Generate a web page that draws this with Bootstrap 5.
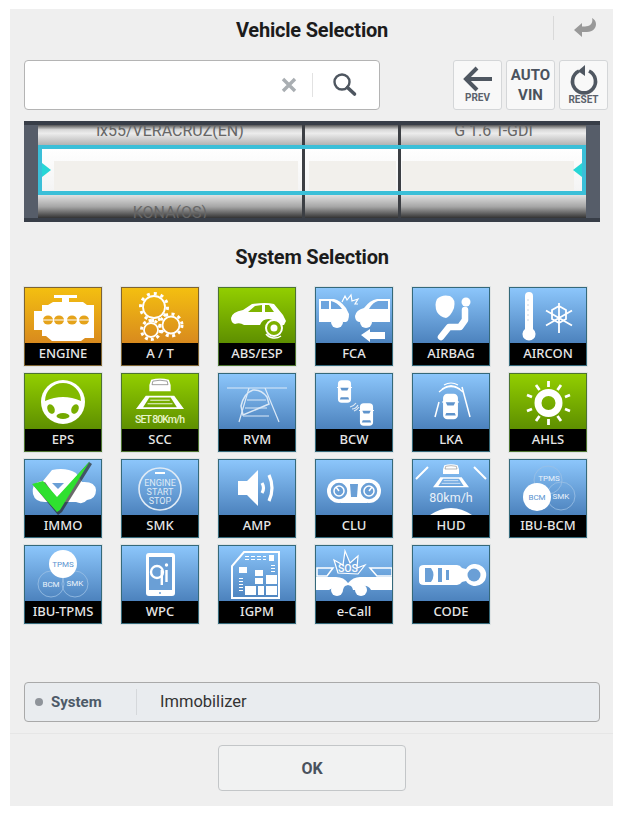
<!DOCTYPE html>
<html lang="en">
<head>
  <meta charset="UTF-8" />
  <meta name="viewport" content="width=device-width, initial-scale=1.0" />
  <title>Vehicle Selection</title>
  <link href="https://cdn.jsdelivr.net/npm/bootstrap@5.3.0/dist/css/bootstrap.min.css" rel="stylesheet" />
  <style>
    body { background: #fff; font-family: Roboto, "Liberation Sans", sans-serif; }
    .panel-main { width: 603px; height: 797px; margin: 9px 0 0 10px; padding: 0 13px 0 14px; background: #efefef; }
    .head-bar { height: 42px; }
    .head-title { font-size: 20px; font-weight: 700; color: #1c1c1c; letter-spacing: -.2px; }
    .head-back { right: -15px; top: 7px; width: 62px; height: 24px; border-left: 1px solid #d9d9d9; }
    .tool-row { height: 50px; margin: 9px -8px 0 0; }
    .search-box { width: 356px; height: 50px; background: #fff; border: 1px solid #b4b4b4; border-radius: 4px; }
    .search-x { margin-right: 15px; }
    .search-sep { width: 1px; height: 24px; background: #e2e2e2; }
    .search-glass { margin: 0 20px 0 18px; }
    .tool-btn { width: 49px; height: 50px; padding: 0; background: #f8f8f8; border: 1px solid #d4d6d8; border-radius: 3px; color: #4a525e; font-weight: 700; line-height: 1; }
    .tool-btn small { font-size: 10px; color: #5a616b; }
    .tool-auto { font-size: 15px; line-height: 20px; }
    .picker { height: 101px; margin-top: 11px; padding: 4px 14px; background: #565d69; box-shadow: inset 0 4px 0 #383e48, inset 0 -4px 0 #383e48; }
    .wheel { background: linear-gradient(#555 0, #d8d8d8 5%, #ececec 9%, #b0b0b0 22%, #fff 24%, #f4f4f4 70%, #e2e2e2 75%, #a5a5a5 88%, #333 100%); color: #666; font-size: 16px; text-align: center; overflow: hidden; }
    .wheel-a { width: 264px; }
    .wheel-b { width: 93px; }
    .wheel-c { width: 185px; }
    .wheel-gap { width: 3px; background: #3c3f44; }
    .wheel-top { height: 21px; line-height: 12px; }
    .wheel-mid { height: 49px; padding: 15px 4px 5px 16px; }
    .wheel-b .wheel-mid { padding: 15px 2px 5px 4px; }
    .wheel-c .wheel-mid { padding: 15px 12px 5px 1px; }
    .wheel-mid div { height: 100%; background: #f2f0ec; }
    .wheel-bot { height: 23px; padding-top: 10px; line-height: 15px; }
    .pick-frame { left: 14px; right: 14px; top: 24px; height: 50px; border: 4px solid #3bbfd8; }
    .pick-arrow { top: 14px; width: 0; height: 0; border-top: 7px solid transparent; border-bottom: 7px solid transparent; }
    .pick-left { left: 0; border-left: 9px solid #27d6d6; }
    .pick-right { right: 0; border-right: 9px solid #27d6d6; }
    .sys-title { height: 30px; margin-top: 20px; font-size: 20px; font-weight: 700; line-height: 30px; color: #1c1c1c; text-align: center; letter-spacing: -.2px; }
    .tile-grid { display: grid; grid-template-columns: repeat(6, 78px); grid-auto-rows: 79px; gap: 7px 19px; margin-top: 15px; height: 338px; }
    .tile { border: 1px solid #35697a; box-shadow: 0 0 0 1px #dfe3e4; }
    .tile svg { display: block; width: 76px; height: 55px; }
    .tile-blue svg { background: linear-gradient(#8cc6fb, #4c82bd); }
    .tile-green { border-color: #4d7430; }
    .tile-green svg { background: linear-gradient(#92ce00, #5e8f00); }
    .tile-orange { border-color: #7f6432; }
    .tile-orange svg { background: linear-gradient(#f4bf10, #d88a1e); }
    .tile-name { height: 22px; background: #000; color: #e6e6e6; font-family: "Noto Sans", sans-serif; font-size: 13px; font-weight: 500; line-height: 21px; text-align: center; white-space: nowrap; }
    .info-bar { height: 40px; margin-top: 57px; background: #e9ecef; border: 1px solid #a9a9a9; border-radius: 4px; }
    .info-dot { width: 8px; height: 8px; margin-left: 10px; background: #8f949a; border-radius: 50%; }
    .info-key { width: 85px; margin-left: 8px; font-size: 15px; font-weight: 700; color: #4d5a68; }
    .info-sep { width: 1px; height: 26px; background: #d5d8db; }
    .info-val { margin-left: 23px; font-size: 16.5px; color: #333; }
    .foot-line { margin: 11px -13px 0 -14px; border-top: 1px solid #e6e6e6; }
    .ok-btn { width: 188px; height: 46px; margin-top: 11px; padding-top: 8px; padding-bottom: 6px; background: #f1f2f2; border: 1px solid #c3c6c8; border-radius: 4px; font-size: 16px; font-weight: 700; color: #4a525e; }
  </style>
</head>
<body>
  <svg width="0" height="0" class="d-block">
    <!-- small car seen from above -->
    <symbol id="car-top" viewBox="0 0 16 26">
      <rect x="1" y="1" width="14" height="24" rx="4" fill="#fff"/>
      <path d="M3.5 9h9l-1.500 3h-6zM4 19h8l1 2.500H3z" fill="#5f94cc"/>
      <path d="M0 9l2-1M16 9l-2-1" stroke="#fff"/>
    </symbol>
    <!-- car seen from behind, on a lane -->
    <symbol id="car-lane" viewBox="0 0 56 36">
      <path d="M18 2q10-3 20 0l2 6v7H16V8z" fill="#fff"/>
      <path d="M20 3.500q8-2 16 0l1 4H19z" fill="none" stroke="#666" stroke-width=".7"/>
      <path d="M12 20h32l11 15H1zM16 22l-7 11h38l-7-11z" fill="#fff" fill-rule="evenodd"/>
      <path d="M17 25h22M14 29h28" stroke="#fff"/>
    </symbol>
  </svg>

  <div class="panel-main">
    <div class="head-bar position-relative d-flex align-items-center justify-content-center">
      <span class="head-title">Vehicle Selection</span>
      <div class="head-back position-absolute d-flex align-items-center justify-content-center">
        <svg width="24" height="20" viewBox="0 0 24 20"><path d="M9 10V5l-8 7 8 7v-5h5c6 0 9-4 9-8 0-3-2-5-4-6 1 3 0 7-4 8-2 .5-4 .5-6 .5z" fill="#999"/></svg>
      </div>
    </div>

    <div class="tool-row d-flex">
      <div class="search-box d-flex align-items-center">
        <div class="flex-grow-1"></div>
        <svg class="search-x" width="16" height="16" viewBox="0 0 16 16"><path d="M2 2l12 12M14 2L2 14" stroke="#a9aeb2" stroke-width="3.400"/></svg>
        <div class="search-sep"></div>
        <svg class="search-glass" width="28" height="26" viewBox="0 0 28 26"><circle cx="11" cy="10" r="7.500" fill="none" stroke="#4e5660" stroke-width="2.400"/><path d="M16.500 15.500l7 6.500" stroke="#4e5660" stroke-width="3.600" stroke-linecap="round"/></svg>
      </div>
      <div class="d-flex ms-auto gap-1 tool-group">
        <button class="btn tool-btn d-flex flex-column align-items-center" type="button">
          <svg class="mt-1" width="32" height="28" viewBox="0 0 32 28"><path d="M30 14H5M15 3L4 14l11 11" fill="none" stroke="#4f5761" stroke-width="4"/></svg>
          <small>PREV</small>
        </button>
        <button class="btn tool-btn tool-auto" type="button">AUTO<br />VIN</button>
        <button class="btn tool-btn d-flex flex-column align-items-center" type="button">
          <svg class="mt-1" width="32" height="30" viewBox="0 0 32 30"><path d="M11 6a11.500 11.500 0 1 0 10 0" fill="none" stroke="#4f5761" stroke-width="3.600"/><path d="M17 0v11l-7-5z" fill="#4f5761"/></svg>
          <small>RESET</small>
        </button>
      </div>
    </div>

    <div class="picker position-relative d-flex">
      <div class="wheel wheel-a">
        <div class="wheel-top">ix55/VERACRUZ(EN)</div>
        <div class="wheel-mid"><div></div></div>
        <div class="wheel-bot">KONA(OS)</div>
      </div>
      <div class="wheel-gap"></div>
      <div class="wheel wheel-b">
        <div class="wheel-top"></div>
        <div class="wheel-mid"><div></div></div>
        <div class="wheel-bot"></div>
      </div>
      <div class="wheel-gap"></div>
      <div class="wheel wheel-c">
        <div class="wheel-top">G 1.6 T-GDI</div>
        <div class="wheel-mid"><div></div></div>
        <div class="wheel-bot"></div>
      </div>
      <div class="pick-frame position-absolute">
        <span class="pick-arrow pick-left position-absolute"></span>
        <span class="pick-arrow pick-right position-absolute"></span>
      </div>
    </div>

    <div class="sys-title">System Selection</div>

    <div class="tile-grid">
      <div class="tile tile-orange">
        <svg viewBox="0 0 76 55"><path d="M29 7h23v3H44v4h14l4 3h7v33H60l-4 3H27l-6-5h-4V42H9V23h8v-6h6l5-3h9v-4h-8z" fill="#fff"/><g fill="#e5a31a"><ellipse cx="23" cy="32" rx="5" ry="4.500"/><ellipse cx="34" cy="32" rx="5" ry="4.500"/><ellipse cx="47" cy="32" rx="5" ry="4.500"/><ellipse cx="59" cy="32" rx="5" ry="4.500"/></g><path d="M16 32h48" stroke="#fff"/></svg>
        <div class="tile-name">ENGINE</div>
      </div>
      <div class="tile tile-orange">
        <svg viewBox="0 0 76 55" fill="none" stroke="#fff"><circle cx="32" cy="19" r="11" stroke-width="1.800"/><circle cx="32" cy="19" r="13.500" stroke-width="3" stroke-dasharray="3 4"/><circle cx="49" cy="37" r="8.500" stroke-width="1.800"/><circle cx="49" cy="37" r="11" stroke-width="3" stroke-dasharray="3 3.500"/><circle cx="29" cy="42" r="7" stroke-width="1.800"/><circle cx="29" cy="42" r="9.500" stroke-width="3" stroke-dasharray="3 3"/></svg>
        <div class="tile-name">A / T</div>
      </div>
      <div class="tile tile-green">
        <svg viewBox="0 0 76 55"><path d="M12 30q1-6 12-8l9-6q14-2 22 0l9 11 3 6-2 4H58a9 9 0 0 0-17 0H25a9 9 0 0 0-9-1q-4-1-4-6z" fill="#fff"/><path d="M36 18l-7 6h14v-7zM46 17v7h9l-5-7z" fill="#7fb400"/><circle cx="55" cy="40" r="8" fill="#7cb000" stroke="#fff" stroke-width="2"/><circle cx="55" cy="40" r="3.500" fill="#fff"/><path d="M47 46a11 11 0 0 0 15 2" fill="none" stroke="#fff" stroke-width="1.500"/></svg>
        <div class="tile-name">ABS/ESP</div>
      </div>
      <div class="tile tile-blue">
        <svg viewBox="0 0 76 55"><path d="M3 11h15q6 1 12 9l3 6q0 7-3 8h-3a7 7 0 0 0-12 0H3z" fill="#fff"/><path d="M5 13v8h8v-8zM15 13v8h11q-5-7-11-8z" fill="#6ea5de"/><circle cx="21" cy="34" r="6" fill="#fff"/><path d="M74 11H61q-7 1-13 9-8 2-9 8 0 5 4 6h1a7 7 0 0 1 12 0h18z" fill="#fff"/><path d="M72 13H62q-5 1-9 8h19z" fill="#6ea5de"/><circle cx="50" cy="34" r="6" fill="#fff"/><path d="M26 14l3-6 2 4 4-5 1 6 6-2-3 5h3" fill="none" stroke="#fff" stroke-width="1.200"/><path d="M45 47l9-6v3h15v7H54v3z" fill="#fff"/></svg>
        <div class="tile-name">FCA</div>
      </div>
      <div class="tile tile-blue">
        <svg viewBox="0 0 76 55"><path d="M24 11q5-5 13-3 6 3 4 12-3 8-8 10-6-1-9-6-3-7 0-13z" fill="#fff"/><circle cx="53" cy="14" r="4.500" fill="#fff"/><path d="M52 22v10l-5 7H36l-8 10" fill="none" stroke="#fff" stroke-width="6.500" stroke-linecap="round" stroke-linejoin="round"/></svg>
        <div class="tile-name">AIRBAG</div>
      </div>
      <div class="tile tile-blue">
        <svg viewBox="0 0 76 55"><path d="M15 8a4 4 0 0 1 8 0v33a6.500 6.500 0 1 1-8 0z" fill="#fff"/><path d="M17 12h2M17 17h2M17 22h2M17 27h2M17 32h2" stroke="#bcd" stroke-width=".8"/><g stroke="#fff" stroke-width="1.800" fill="none"><path d="M42 22l7-4 7 4v9l-7 4-7-4zM49 15v30M36 22.500l26 15M62 22.500l-26 15"/></g></svg>
        <div class="tile-name">AIRCON</div>
      </div>

      <div class="tile tile-green">
        <svg viewBox="0 0 76 55"><circle cx="38" cy="28" r="22" fill="#fff"/><path d="M20 27a18 18 0 0 1 36 0q-18-8-36 0z" fill="#82ba00"/><ellipse cx="26" cy="35" rx="3.500" ry="5" fill="#79ae00" transform="rotate(-25 26 35)"/><ellipse cx="50" cy="35" rx="3.500" ry="5" fill="#79ae00" transform="rotate(25 50 35)"/><ellipse cx="38" cy="42" rx="6.500" ry="3" fill="#74a800"/></svg>
        <div class="tile-name">EPS</div>
      </div>
      <div class="tile tile-green">
        <svg viewBox="0 0 76 55"><use href="#car-lane" x="13" y="4" width="50" height="32"/><text x="38" y="49" text-anchor="middle" fill="#e8f5c8" font-family="Roboto" font-size="10.500" font-weight="500" textLength="50">SET 80Km/h</text></svg>
        <div class="tile-name">SCC</div>
      </div>
      <div class="tile tile-blue">
        <svg viewBox="0 0 76 55" fill="none" stroke="#dbe9f7" stroke-width="1.200"><path d="M8 14h60M20 48l10-34M60 48L46 14M24 42h26M26 34h22M28 26h19"/><path d="M22 32q3-13 12-16 8-1 14 7l2 7-26 11z" stroke-width="1.500"/></svg>
        <div class="tile-name">RVM</div>
      </div>
      <div class="tile tile-blue">
        <svg viewBox="0 0 76 55"><use href="#car-top" x="21" y="5" width="15" height="25"/><use href="#car-top" x="43" y="28" width="15" height="25"/><path d="M36 35q4 0 6-4M34 33q4-1 6-4M38 37q3-1 5-4" fill="none" stroke="#dfeaf5" stroke-width="1.200"/></svg>
        <div class="tile-name">BCW</div>
      </div>
      <div class="tile tile-blue">
        <svg viewBox="0 0 76 55"><use href="#car-top" x="29" y="17" width="17" height="31"/><path d="M26 18q12-11 24 0M29 15q9-7 18 0M31 11q7-4 14 0" fill="none" stroke="#fff" stroke-width="1.200"/><path d="M26 28l-4 15M49 13l8 30" stroke="#fff" stroke-width="1.500"/></svg>
        <div class="tile-name">LKA</div>
      </div>
      <div class="tile tile-green">
        <svg viewBox="0 0 76 55"><circle cx="38.500" cy="29" r="10.500" fill="none" stroke="#fff" stroke-width="7"/><path d="M38.500 7v6M38.500 45v6M26 11l3.500 5M51 11l-3.500 5M26 47l3.500-5M51 47l-3.500-5M17 21l5 2M60 21l-5 2M17 37l5-2M60 37l-5-2" stroke="#fff" stroke-width="2.800"/></svg>
        <div class="tile-name">AHLS</div>
      </div>

      <div class="tile tile-blue">
        <svg viewBox="0 0 76 55"><path d="M8 34q-2-12 10-13l9-11q14-3 24 3l6 9q13-1 14 8 0 9-9 10-4 5-11 2H20q-10 0-12-8z" fill="#fff"/><path d="M27 23h12l-6 6z" fill="#6a9fd6"/><path d="M9 26l11-4 12 17L64 2l3 2-30 48-4 3z" fill="#2b2b2b" opacity=".7"/><path d="M7 24l11-3 14 16L65 1 35 50l-3 2z" fill="#2fe02f"/></svg>
        <div class="tile-name">IMMO</div>
      </div>
      <div class="tile tile-blue">
        <svg viewBox="0 0 76 55"><circle cx="38" cy="29" r="21" fill="none" stroke="#dfeaf5" stroke-width="1.600"/><path d="M33 13h10" stroke="#fff" stroke-width="2"/><g fill="#dfeaf5" font-family="Roboto" font-size="9" text-anchor="middle"><text x="38" y="26">ENGINE</text><text x="38" y="35">START</text><text x="38" y="44">STOP</text></g></svg>
        <div class="tile-name">SMK</div>
      </div>
      <div class="tile tile-blue">
        <svg viewBox="0 0 76 55"><path d="M19 21h9l11-11v36L28 35h-9z" fill="#fff"/><path d="M43 23q3 5 0 10M50 15q6 13 0 26" fill="none" stroke="#fff" stroke-width="3.200"/></svg>
        <div class="tile-name">AMP</div>
      </div>
      <div class="tile tile-blue">
        <svg viewBox="0 0 76 55"><g fill="#fff"><circle cx="23" cy="31" r="12"/><circle cx="53" cy="31" r="12"/><path d="M23 19h30l-2 24H25z"/></g><path d="M34 24h8l-1 13h-6z" fill="#6a9fd6"/><g fill="#6a9fd6" stroke="#fff" stroke-width="1.500"><circle cx="23" cy="31" r="9"/><circle cx="53" cy="31" r="9"/></g><g fill="none" stroke="#fff" stroke-width="1.500"><circle cx="23" cy="31" r="5"/><circle cx="53" cy="31" r="5"/><path d="M23 31l-3-4M53 31l3-4"/></g></svg>
        <div class="tile-name">CLU</div>
      </div>
      <div class="tile tile-blue">
        <svg viewBox="0 0 76 55"><path d="M3 19L15 7M73 19L61 7" stroke="#fff" stroke-width="2"/><use href="#car-lane" x="19" y="4" width="38" height="24"/><text x="38" y="42" text-anchor="middle" fill="#e8f0f8" font-family="Roboto" font-size="12.500">80km/h</text><path d="M17 55q21-14 42 0z" fill="#fff"/></svg>
        <div class="tile-name">HUD</div>
      </div>
      <div class="tile tile-blue">
        <svg viewBox="0 0 76 55"><g fill="none" stroke="#9cc0e4" stroke-width=".8"><circle cx="38" cy="20" r="14"/><circle cx="51" cy="36" r="14"/></g><circle cx="27" cy="37" r="14" fill="#fff"/><g font-family="Roboto" font-size="8" text-anchor="middle"><text x="39" y="21" fill="#eaf2fa">TPMS</text><text x="51" y="39" fill="#eaf2fa">SMK</text><text x="27" y="40" fill="#5a93d0">BCM</text></g></svg>
        <div class="tile-name">IBU-BCM</div>
      </div>

      <div class="tile tile-blue">
        <svg viewBox="0 0 76 55"><g fill="none" stroke="#9cc0e4" stroke-width=".8"><circle cx="26" cy="38" r="13"/><circle cx="50" cy="38" r="13"/></g><circle cx="38" cy="18" r="14" fill="#fff"/><g font-family="Roboto" font-size="8" text-anchor="middle"><text x="38" y="21" fill="#5a93d0">TPMS</text><text x="26" y="41" fill="#eaf2fa">BCM</text><text x="50" y="40" fill="#eaf2fa">SMK</text></g></svg>
        <div class="tile-name">IBU-TPMS</div>
      </div>
      <div class="tile tile-blue">
        <svg viewBox="0 0 76 55"><rect x="24" y="7" width="29" height="43" rx="3" fill="#fff"/><rect x="27" y="11" width="23" height="33" fill="#6a9fd6"/><circle cx="38" cy="47" r="1" fill="#6a9fd6"/><circle cx="35" cy="26" r="6" fill="none" stroke="#fff" stroke-width="2.400"/><path d="M39.800 24v15M44.500 24v12" stroke="#fff" stroke-width="2.400"/><circle cx="44.500" cy="19" r="1.700" fill="#fff"/></svg>
        <div class="tile-name">WPC</div>
      </div>
      <div class="tile tile-blue">
        <svg viewBox="0 0 76 55"><path d="M25 6h35v46H13V20z" fill="none" stroke="#fff" stroke-width="2"/><g fill="#fff"><rect x="20" y="21" width="8" height="6"/><rect x="36" y="24" width="8" height="6"/><rect x="36" y="32" width="8" height="6"/><rect x="47" y="29" width="11" height="9"/><rect x="26" y="40" width="11" height="9"/><rect x="39" y="40" width="6" height="9"/><rect x="47" y="40" width="11" height="9"/><rect x="50" y="9" width="5" height="6"/><path d="M26 10h4v1h-4zM32 10h4v1h-4zM38 10h4v1h-4zM44 10h3v1h-3zM26 13h4v1h-4zM32 13h4v1h-4zM38 13h4v1h-4zM44 13h3v1h-3z"/><path d="M20 32h4v1h-4zM20 35h4v1h-4zM20 38h4v1h-4zM20 41h4v1h-4zM20 44h4v1h-4zM52 19h4v1h-4zM52 22h4v1h-4zM52 25h4v1h-4z"/></g></svg>
        <div class="tile-name">IGPM</div>
      </div>
      <div class="tile tile-blue">
        <svg viewBox="0 0 76 55"><path d="M1 22h16l-6 8H1zM76 22H54l7 8h15z" fill="none" stroke="#fff" stroke-width="1.500"/><path d="M0 31h20q8 0 12 6 5-6 12-6h32v13H55a8 8 0 0 0-14 0h-4a8 8 0 0 0-2-4l-3-1-3 1a8 8 0 0 0-2 4h-4a8 8 0 0 0-10 0H0z" fill="#fff"/><circle cx="21" cy="44" r="6" fill="#fff"/><circle cx="45" cy="44" r="6" fill="#fff"/><path d="M22 27l-4-13 9 5 2-14 5 12 8-7-1 12 8-3-7 9z" fill="#6ea5de" stroke="#fff" stroke-width="1.200"/><text x="32" y="26" text-anchor="middle" fill="#fff" font-family="Roboto" font-size="10.500" font-weight="500">SOS</text></svg>
        <div class="tile-name">e-Call</div>
      </div>
      <div class="tile tile-blue">
        <svg viewBox="0 0 76 55"><path d="M6 23q0-4 5-4h33q3 0 5 3 4 1 4 1a11 11 0 1 1 0 12q0 0-4 1-2 3-5 3H11q-5 0-5-4z" fill="#fff"/><circle cx="61" cy="29" r="6.500" fill="#6a9fd6"/><path d="M12 22h6q5 7 0 14h-6zM25 22h4v14h-4zM33 24h3v10h-3z" fill="#6a9fd6"/></svg>
        <div class="tile-name">CODE</div>
      </div>
    </div>

    <div class="info-bar d-flex align-items-center">
      <span class="info-dot"></span>
      <span class="info-key">System</span>
      <span class="info-sep"></span>
      <span class="info-val">Immobilizer</span>
    </div>

    <div class="foot-line"></div>

    <div class="d-flex justify-content-center">
      <button class="btn ok-btn" type="button">OK</button>
    </div>
  </div>

  <script src="https://cdn.jsdelivr.net/npm/bootstrap@5.3.0/dist/js/bootstrap.bundle.min.js"></script>
</body>
</html>
